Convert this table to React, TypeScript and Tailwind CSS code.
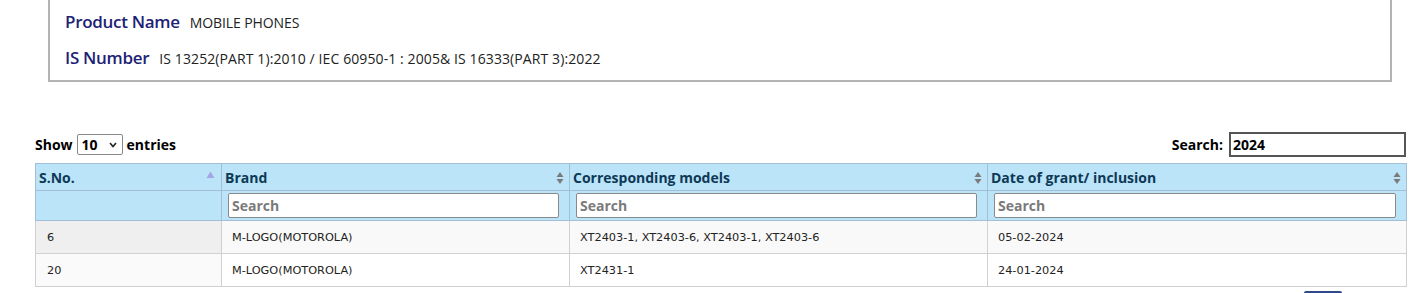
import React from 'react';

const rows = [
    { sno: '6', brand: 'M-LOGO(MOTOROLA)', models: 'XT2403-1, XT2403-6, XT2403-1, XT2403-6', date: '05-02-2024' },
    { sno: '20', brand: 'M-LOGO(MOTOROLA)', models: 'XT2431-1', date: '24-01-2024' },
];

function SortBoth() {
    return (
        <svg width="8" height="14" viewBox="0 0 8 14" className="shrink-0">
            <path d="M4 1 L7.5 6 H0.5 Z" fill="#7a7a7a" />
            <path d="M4 13 L7.5 8 H0.5 Z" fill="#7a7a7a" />
        </svg>
    );
}

function SortAsc() {
    return (
        <svg width="9" height="8" viewBox="0 0 9 8" className="shrink-0">
            <path d="M4.5 0.5 L8.5 7 H0.5 Z" fill="#a3a6e6" />
        </svg>
    );
}

function HeaderCell({ label, sort }: { label: string; sort: 'asc' | 'both' }) {
    return (
        <th className="h-[27px] border border-[#a3bfd8] px-[3px] text-left align-middle">
            <div className="flex items-center justify-between pr-[2px] pt-[1px]">
                <span className="text-[14px] font-bold text-[#0d3957]">{label}</span>
                {sort === 'asc' ? (
                    <span className="-mt-[6px] mr-[1px]">
                        <SortAsc />
                    </span>
                ) : (
                    <SortBoth />
                )}
            </div>
        </th>
    );
}

function FilterCell({ empty }: { empty?: boolean }) {
    return (
        <td className="h-[30px] border border-[#a3bfd8] pl-[6px] pr-[10px] align-middle">
            {!empty && (
                <input
                    placeholder="Search"
                    className="block h-[25px] w-full rounded-[2px] border border-[#8a8a8a] bg-white px-[3px] text-[14px] font-bold text-[#333] placeholder:text-[#7a7a7a] outline-none"
                />
            )}
        </td>
    );
}

export default function App() {
    return (
        <div className="h-[293px] w-[1414px] overflow-hidden bg-white font-['Open_Sans',sans-serif]">
            <div className="ml-[48px] h-[82px] w-[1344px] border-x-2 border-b-2 border-[#b3b3b3] pl-[15px] pt-[10px]">
                <div className="flex h-[24px] items-center gap-[10px]">
                    <span className="text-[17px] font-semibold tracking-[-0.3px] text-[#1c2275]">Product Name</span>
                    <span className="text-[14px] tracking-[-0.1px] text-[#222]">MOBILE PHONES</span>
                </div>
                <div className="mt-[12px] flex h-[24px] items-center gap-[10px]">
                    <span className="text-[17px] font-semibold tracking-[-0.3px] text-[#1c2275]">IS Number</span>
                    <span className="text-[14px] tracking-[0.1px] text-[#222]">IS 13252(PART 1):2010 / IEC 60950-1 : 2005&amp; IS 16333(PART 3):2022</span>
                </div>
            </div>

            <div className="ml-[35px] mt-[50px] w-[1371px]">
                <div className="flex h-[25px] items-center justify-between">
                    <div className="flex items-center gap-[4px] text-[14px] font-bold text-black">
                        <span>Show</span>
                        <div className="flex h-[21px] w-[46px] items-center justify-between rounded-[2px] border border-[#8a8a8a] pl-[4px] pr-[5px]">
                            <span>10</span>
                            <svg width="8" height="6" viewBox="0 0 8 6">
                                <path d="M1 1 L4 4.5 L7 1" stroke="#222" strokeWidth="1.6" fill="none" />
                            </svg>
                        </div>
                        <span>entries</span>
                    </div>
                    <div className="flex items-center gap-[6px] text-[14px] font-bold text-black">
                        <span>Search:</span>
                        <div className="flex h-[25px] w-[177px] items-center border-2 border-[#555] pl-[2px]">2024</div>
                    </div>
                </div>

                <table className="mt-[6px] w-[1371px] table-fixed border-collapse">
                    <colgroup>
                        <col className="w-[186px]" />
                        <col className="w-[348px]" />
                        <col className="w-[418px]" />
                        <col className="w-[419px]" />
                    </colgroup>
                    <thead className="bg-[#bbe4f8]">
                        <tr>
                            <HeaderCell label="S.No." sort="asc" />
                            <HeaderCell label="Brand" sort="both" />
                            <HeaderCell label="Corresponding models" sort="both" />
                            <HeaderCell label="Date of grant/ inclusion" sort="both" />
                        </tr>
                        <tr>
                            <FilterCell empty />
                            <FilterCell />
                            <FilterCell />
                            <FilterCell />
                        </tr>
                    </thead>
                    <tbody className="font-['DejaVu_Sans',sans-serif] text-[11.3px] text-[#222]">
                        {rows.map((r, i) => (
                            <tr key={r.sno} className={i % 2 === 0 ? 'bg-[#f9f9f9]' : 'bg-white'}>
                                <td className={`h-[33px] border border-[#d0d0d0] pl-[11px] pt-[2px] ${i % 2 === 0 ? 'bg-[#efefef]' : 'bg-[#fafafa]'}`}>{r.sno}</td>
                                <td className="border border-[#d0d0d0] pl-[10px] pt-[2px]">{r.brand}</td>
                                <td className="border border-[#d0d0d0] pl-[10px] pt-[2px]">{r.models}</td>
                                <td className="border border-[#d0d0d0] pl-[10px] pt-[2px]">{r.date}</td>
                            </tr>
                        ))}
                    </tbody>
                </table>

                <div className="mt-[4px] flex justify-end pr-[64px]">
                    <div className="h-[20px] w-[38px] rounded-[2px] bg-[#2d4b8c]" />
                </div>
            </div>
        </div>
    );
}
